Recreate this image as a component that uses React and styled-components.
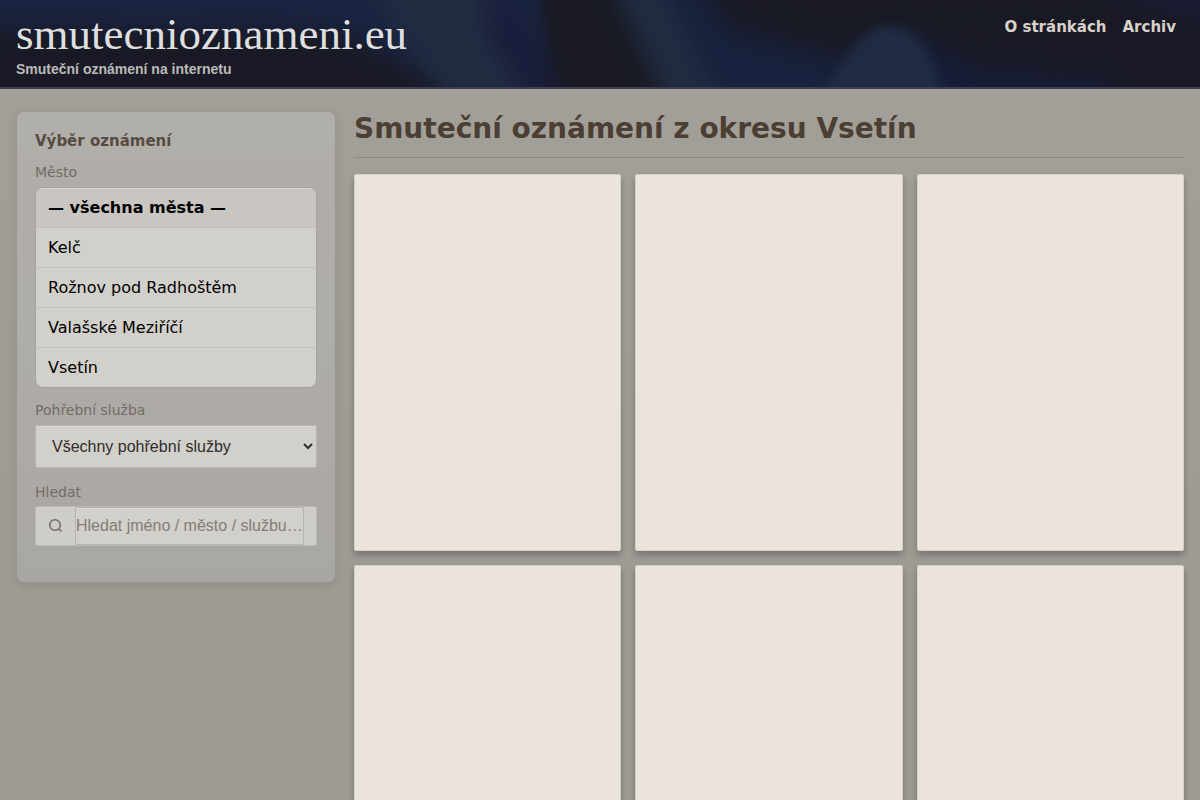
import React, { useState } from "react"
import styled, { createGlobalStyle } from "styled-components"

const GlobalStyle = createGlobalStyle`
  *, *::before, *::after {
    box-sizing: border-box;
  }

  body {
    margin: 0;
    min-height: 100vh;
    background: linear-gradient(#a3a09a, #9e9b95 600px);
    color: #000;
    font: 16px/24px "DejaVu Sans", sans-serif;
  }
`

const Header = styled.header`
  position: relative;
  z-index: 0;
  display: flex;
  justify-content: space-between;
  align-items: flex-start;
  padding: 8px 16px;
  border-bottom: 2px solid #3d3e4e;
  background: #191a25;
`

// decorative backdrop, sits under the header text
const Backdrop = styled.svg`
  position: absolute;
  inset: 0;
  z-index: -1;
  width: 100%;
  height: 100%;
`

const Brand = styled.div`
  display: flex;
  flex-direction: column;
`

const Logo = styled.a`
  color: #dfdfdf;
  font: 45px/52px "Liberation Serif", serif;
  text-decoration: none;
`

const Tagline = styled.span`
  color: #bcbbb9;
  font: bold 14px/19px "Liberation Sans", sans-serif;
`

const Nav = styled.nav`
  display: flex;
  gap: 16px;
  padding: 7px 8px;
`

const NavLink = styled.a`
  color: #d8d2ca;
  font-size: 15px;
  font-weight: bold;
  text-decoration: none;
`

const Page = styled.div`
  display: grid;
  grid-template-columns: 320px minmax(0, 1fr);
  align-items: start;
  gap: 18px;
  padding: 22px 16px;
`

const Sidebar = styled.aside`
  padding: 18px;
  border: 1px solid rgba(0, 0, 0, 0.04);
  border-radius: 8px;
  background: linear-gradient(#b1b0ab, #b0aca8 20%, #aeada8 45%, #ada9a5 75%, #a8a7a3) padding-box;
  box-shadow: 0 2px 8px rgba(0, 0, 0, 0.1);
`

const SidebarTitle = styled.h2`
  margin: 0;
  color: #574b41;
  font-size: 15px;
  line-height: 22px;
`

const Label = styled.label`
  display: block;
  margin-top: ${props => props.$top}px;
  color: #746b66;
  font-size: 14px;
  line-height: 20px;
`

const CityList = styled.div`
  display: flex;
  flex-direction: column;
  margin-top: 5px;
  border: 1px solid rgba(0, 0, 0, 0.04);
  border-radius: 8px;
  overflow: hidden;
`

const CityButton = styled.button`
  height: 40px;
  padding: 0 12px;
  border: 0;
  border-bottom: 1px solid #c1bfbb;
  background: ${props => (props.$active ? "#c9c5c0" : "#d1d0cb")};
  color: #000;
  font: ${props => (props.$active ? "bold" : "normal")} 16px "DejaVu Sans", sans-serif;
  text-align: left;
  cursor: pointer;

  &:first-child {
    box-shadow: inset 0 1px #d6d4d0;
  }

  &:last-child {
    height: 39px;
    border-bottom: 0;
  }
`

const Select = styled.select`
  display: block;
  width: 100%;
  height: 43px;
  margin-top: 5px;
  padding: 0 12px;
  border: 1px solid #b9b6b1;
  border-radius: 2px;
  background: #d1d0cb;
  box-shadow: inset 0 1px #dddcd8;
  color: #2f2d2a;
  font: 16px "Liberation Sans", sans-serif;
`

const SearchBox = styled.div`
  display: flex;
  height: 40px;
  margin: 4px 0 18px;
  padding-right: 12px;
  border: 1px solid #bbb9b4;
  border-radius: 2px;
  background: #cfcdc9;
`

const SearchIcon = styled.svg`
  flex: none;
  width: 15px;
  height: 15px;
  margin: 11px 12px;
  fill: none;
  stroke: #746b65;
  stroke-width: 1.5;
`

const SearchInput = styled.input`
  flex: 1;
  min-width: 0;
  padding: 0;
  border: 1px solid #b5b3ae;
  border-radius: 2px;
  background: #d1d0cb;
  box-shadow: inset 0 1px #dddcd8;
  color: #2f2d2a;
  font: 16px "Liberation Sans", sans-serif;

  &::placeholder {
    color: #857c77;
  }
`

const Title = styled.h1`
  margin: 0 0 16px;
  padding: 1px 0 11px;
  border-bottom: 1px solid #8d8983;
  color: #4b3e33;
  font-size: 28px;
  line-height: 34px;
`

const Grid = styled.div`
  display: grid;
  grid-template-columns: repeat(3, minmax(0, 1fr));
  gap: 14px;
`

const Card = styled.article`
  aspect-ratio: 100 / 141;
  border: 1px solid #d5cfc8;
  border-radius: 2px;
  background: #ebe3dd;
  box-shadow: 0 4px 6px rgba(0, 0, 0, 0.25);
`

const cities = ["— všechna města —", "Kelč", "Rožnov pod Radhoštěm", "Valašské Meziříčí", "Vsetín"]
const notices = [1, 2, 3, 4, 5, 6]

function HeaderBackdrop() {
  return (
    <Backdrop viewBox="0 0 1200 87" preserveAspectRatio="none" aria-hidden="true">
      <defs>
        <filter id="soft" x="-30%" y="-60%" width="160%" height="220%" colorInterpolationFilters="sRGB">
          <feGaussianBlur stdDeviation="12" />
        </filter>
        <filter id="edge" x="-30%" y="-60%" width="160%" height="220%" colorInterpolationFilters="sRGB">
          <feGaussianBlur stdDeviation="6" />
        </filter>
      </defs>
      <g filter="url(#soft)">
        <path d="M-40 -40 H540 L560 130 H490 L400 60 L330 30 L-40 28Z" fill="#1a2340" />
        <path d="M350 -40 H480 L550 130 H470 L420 60Z" fill="#212c42" />
        <path d="M480 -20 L525 30 L560 110 H535 L490 40Z" fill="#1a1b3a" />
      </g>
      <path d="M538 -30 H600 L665 120 H580 L555 60Z" fill="#191a22" filter="url(#edge)" />
      <g filter="url(#soft)">
        <path d="M650 -40 H685 L730 30 L850 60 L830 120 H690Z" fill="#18213d" />
        <path d="M600 -40 H650 L725 120 H675Z" fill="#212c42" />
        <path d="M760 -30 H1100 V15 L880 20 L800 30Z" fill="#191a22" />
        <path d="M905 30 L980 70 L1110 80 V120 H880Z" fill="#171d38" />
        <path d="M1110 -40 H1240 V25 Q1150 5 1110 -10Z" fill="#1b1c38" />
      </g>
      <path d="M805 115 L855 44 Q890 10 918 40 Q935 60 948 115Z" fill="#202c45" filter="url(#edge)" />
    </Backdrop>
  )
}

function App() {
  const [city, setCity] = useState(cities[0])
  const [query, setQuery] = useState("")

  return (
    <>
      <GlobalStyle />
      <Header>
        <HeaderBackdrop />
        <Brand>
          <Logo href="#">smutecnioznameni.eu</Logo>
          <Tagline>Smuteční oznámení na internetu</Tagline>
        </Brand>
        <Nav>
          <NavLink href="#about">O stránkách</NavLink>
          <NavLink href="#archive">Archiv</NavLink>
        </Nav>
      </Header>

      <Page>
        <Sidebar>
          <SidebarTitle>Výběr oznámení</SidebarTitle>

          <Label as="div" id="city-label" $top={10}>Město</Label>
          <CityList role="group" aria-labelledby="city-label">
            {cities.map(name => (
              <CityButton
                key={name}
                type="button"
                $active={name === city}
                aria-pressed={name === city}
                onClick={() => setCity(name)}
              >
                {name}
              </CityButton>
            ))}
          </CityList>

          <Label htmlFor="service" $top={12}>Pohřební služba</Label>
          <Select id="service">
            <option>Všechny pohřební služby</option>
          </Select>

          <Label htmlFor="search" $top={14}>Hledat</Label>
          <SearchBox>
            <SearchIcon viewBox="0 0 15 15" aria-hidden="true">
              <circle cx="7" cy="7" r="5.3" />
              <path d="M10.8 10.8 L13.5 13.5" />
            </SearchIcon>
            <SearchInput
              id="search"
              type="text"
              placeholder="Hledat jméno / město / službu…"
              value={query}
              onChange={e => setQuery(e.target.value)}
            />
          </SearchBox>
        </Sidebar>

        <main>
          <Title>Smuteční oznámení z okresu Vsetín</Title>
          <Grid>
            {notices.map(n => (
              <Card key={n} />
            ))}
          </Grid>
        </main>
      </Page>
    </>
  )
}

export default App
